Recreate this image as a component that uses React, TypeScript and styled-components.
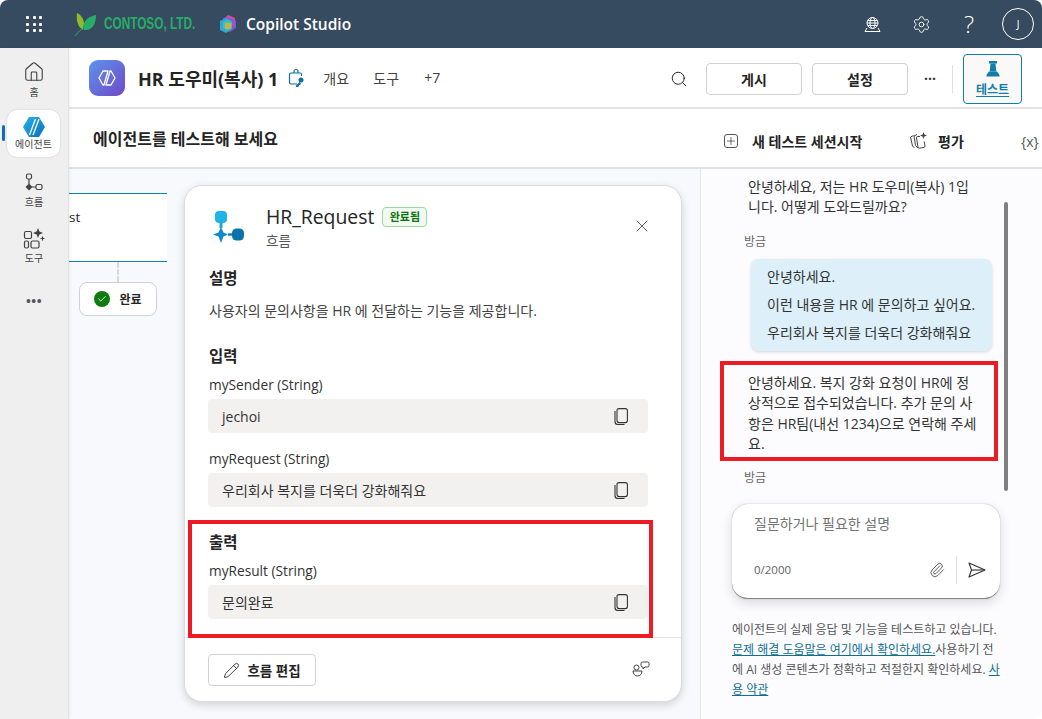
import React from "react";
import styled, { createGlobalStyle } from "styled-components";
import { Search, Settings, X, Pencil, Paperclip, Plus, Check, House } from "lucide-react";

const Global = createGlobalStyle`
  * { box-sizing: border-box; }
  html, body { margin: 0; padding: 0; height: 100%; background: #fff; overflow: hidden; }
  body { font-family: "Open Sans", "Noto Sans CJK KR", sans-serif; color: #242424; }
`;

const Shell = styled.div`
  width: 1042px;
  height: 719px;
  display: flex;
  flex-direction: column;
  overflow: hidden;
  position: relative;
`;

const TopBar = styled.header`
  height: 48px;
  flex: none;
  background: #364b60;
  border-radius: 8px 8px 0 0;
  display: flex;
  align-items: center;
  color: #fff;
`;
const Waffle = styled.div`
  margin-left: 26px;
  width: 16px;
  display: grid;
  grid-template-columns: repeat(3, 3px);
  gap: 3.5px;
  span { width: 3px; height: 3px; background: #fff; border-radius: 1px; }
`;
const LogoSlot = styled.div<{ $ml: number }>`
  margin-left: ${(p) => p.$ml}px;
  display: flex;
`;
const ContosoText = styled.span`
  margin-left: 7px;
  width: 92px;
  font-family: "Liberation Sans", sans-serif;
  font-size: 16px;
  font-weight: 700;
  color: #27ad68;
  white-space: nowrap;
  transform: scaleX(0.737);
  transform-origin: left center;
`;
const StudioName = styled.span`
  margin-left: 9px;
  font-size: 15.5px;
  font-weight: 600;
`;
const TopRight = styled.div`
  margin-left: auto;
  margin-right: 8px;
  display: flex;
  align-items: center;
`;
const TopIcon = styled.div<{ $w: number }>`
  width: ${(p) => p.$w}px;
  display: flex;
  justify-content: center;
`;
const HelpMark = styled.span`
  font-size: 24px;
  line-height: 28px;
  font-weight: 300;
`;
const Avatar = styled.div`
  width: 32px;
  height: 32px;
  margin-left: 9px;
  border-radius: 50%;
  border: 1px solid #fff;
  display: flex;
  align-items: center;
  justify-content: center;
  font-size: 10px;
`;

const Main = styled.div`
  flex: 1;
  display: flex;
  min-height: 0;
`;

const Rail = styled.nav`
  width: 69px;
  flex: none;
  background: #efefef;
  border-right: 1px solid #e3e3e3;
  box-shadow: 1px 0 3px rgba(0, 0, 0, 0.06);
  display: flex;
  flex-direction: column;
  align-items: center;
  padding-top: 8px;
  position: relative;
  z-index: 1;
`;
const RailItem = styled.div<{ $active?: boolean; $mt?: number }>`
  width: 53px;
  height: ${(p) => (p.$active ? 47 : 46)}px;
  margin-top: ${(p) => p.$mt ?? 0}px;
  margin-left: ${(p) => (p.$active ? -1 : 0)}px;
  display: flex;
  flex-direction: column;
  align-items: center;
  justify-content: center;
  gap: ${(p) => (p.$active ? 1 : 3)}px;
  font-size: 10px;
  line-height: 12px;
  color: #424242;
  background: ${(p) => (p.$active ? "#fff" : "transparent")};
  border-radius: 10px;
  box-shadow: ${(p) => (p.$active ? "0 0 2px rgba(0,0,0,0.18)" : "none")};
  position: relative;
`;
const RailMark = styled.i`
  position: absolute;
  left: -5px;
  top: 15px;
  width: 3px;
  height: 16px;
  border-radius: 2px;
  background: #0f6cbd;
`;
const RailDots = styled.div`
  margin-top: 26px;
  font-size: 13px;
  font-weight: 700;
  letter-spacing: 0.5px;
  color: #555;
  line-height: 12px;
`;

const Content = styled.div`
  flex: 1;
  min-width: 0;
  display: flex;
  flex-direction: column;
`;

const AgentHeader = styled.div`
  height: 61px;
  flex: none;
  background: #fff;
  border-bottom: 2px solid #e4e4e4;
  display: flex;
  align-items: center;
  padding-left: 20px;
`;
const AgentBadge = styled.div`
  width: 36px;
  height: 36px;
  border-radius: 9px;
  background: linear-gradient(135deg, #5c94ec, #7049c6);
  display: flex;
  align-items: center;
  justify-content: center;
`;
const AgentName = styled.h1`
  margin: 0 0 0 13px;
  font-size: 18px;
  font-weight: 700;
  white-space: nowrap;
`;
const BriefSlot = styled.div`
  margin: 0 17px 0 10px;
  display: flex;
`;
const HeadTab = styled.span<{ $w: number }>`
  width: ${(p) => p.$w}px;
  font-size: 14px;
  color: #424242;
`;
const HeaderRight = styled.div`
  margin: 2px 20px 0 auto;
  display: flex;
  align-items: center;
`;
const SearchIcon = styled(Search)`
  margin-right: 8px;
`;
const OutlineBtn = styled.button`
  width: 96px;
  height: 32px;
  margin-left: 10px;
  border: 1px solid #d1d1d1;
  border-radius: 4px;
  background: #fff;
  font: inherit;
  font-size: 14px;
  font-weight: 700;
  color: #242424;
`;
const More = styled.span`
  width: 44px;
  text-align: center;
  font-size: 14px;
  font-weight: 700;
  color: #333;
`;
const VRule = styled.span`
  width: 1px;
  height: 28px;
  background: #e0e0e0;
`;
const TestBtn = styled.button`
  width: 59px;
  height: 50px;
  margin-left: 10px;
  border: 1px solid #0f7ea8;
  border-radius: 4px;
  background: #faf9f8;
  font: inherit;
  font-size: 12px;
  font-weight: 700;
  color: #0f7ea8;
  display: flex;
  flex-direction: column;
  align-items: center;
  justify-content: center;
  gap: 2px;
  padding: 2px 0 0;
  span { text-decoration: underline; text-underline-offset: 2px; }
`;

const Panels = styled.div`
  flex: 1;
  display: flex;
  min-height: 0;
`;
const LeftPanel = styled.section`
  width: 631px;
  flex: none;
  display: flex;
  flex-direction: column;
`;
const PanelHead = styled.div`
  height: 60px;
  flex: none;
  background: #fff;
  border-bottom: 2px solid #e0e0e0;
  padding-left: 24px;
  display: flex;
  align-items: center;
  font-size: 16px;
  font-weight: 700;
`;
const Canvas = styled.div`
  flex: 1;
  background: #f7f9fc;
  display: flex;
  padding: 16px 0 0;
  min-height: 0;
`;
const FlowSide = styled.div`
  width: 98px;
  flex: none;
  margin-right: 17px;
  display: flex;
  flex-direction: column;
  align-items: flex-start;
  padding-top: 8px;
`;
const FlowNode = styled.div`
  width: 98px;
  height: 69px;
  background: #fff;
  border-top: 1px solid #0b86b5;
  border-bottom: 1px solid #0b86b5;
  font-size: 13.5px;
  padding-top: 14px;
`;
const Dash = styled.i`
  width: 0;
  height: 20px;
  margin-left: 48px;
  border-left: 2px dashed #d8d8d8;
`;
const DonePill = styled.div`
  width: 78px;
  height: 34px;
  margin-left: 10px;
  border: 1px solid #d1d1d1;
  border-radius: 8px;
  background: #fff;
  display: flex;
  align-items: center;
  justify-content: center;
  gap: 9px;
  font-size: 12px;
  font-weight: 700;
`;
const CheckDot = styled.span`
  width: 16px;
  height: 16px;
  border-radius: 50%;
  background: #107c10;
  display: flex;
  align-items: center;
  justify-content: center;
`;

const Card = styled.article`
  width: 498px;
  height: 517px;
  flex: none;
  background: #fff;
  border: 1px solid #dcdcdc;
  border-radius: 18px;
  box-shadow: 0 3px 8px rgba(0, 0, 0, 0.16);
  display: flex;
  flex-direction: column;
  padding: 0 24px;
`;
const CardHead = styled.div`
  display: flex;
  align-items: flex-start;
  height: 75px;
  padding: 19px 0 0 4px;
`;
const GlyphSlot = styled.div`
  margin-top: 5px;
  display: flex;
`;
const CardTitles = styled.div`
  margin-left: 21px;
`;
const TitleRow = styled.div`
  display: flex;
  align-items: center;
  gap: 8px;
  height: 24px;
`;
const CardTitle = styled.span`
  font-size: 19.4px;
  line-height: 24px;
`;
const DoneBadge = styled.span`
  height: 20px;
  width: 45px;
  border: 1px solid #9fd89f;
  border-radius: 4px;
  background: #f1faf1;
  color: #0e700e;
  font-size: 11px;
  font-weight: 700;
  text-align: center;
  line-height: 17px;
`;
const CardSub = styled.div`
  margin-top: 3px;
  font-size: 13.5px;
  line-height: 18px;
  color: #555;
`;
const CloseBtn = styled.div`
  margin: 11px 5px 0 auto;
  display: flex;
  color: #424242;
`;
const SectionTitle = styled.h3<{ $mt: number }>`
  margin: ${(p) => p.$mt}px 0 0;
  font-size: 15.5px;
  line-height: 20px;
  font-weight: 700;
`;
const Desc = styled.p`
  margin: 13px 0 0;
  font-size: 14px;
  line-height: 20px;
  color: #424242;
`;
const FieldLabel = styled.div<{ $mt: number }>`
  margin-top: ${(p) => p.$mt}px;
  font-size: 13.7px;
  line-height: 18px;
  color: #333;
`;
const FieldBox = styled.div`
  margin: 5px 0 0 -1px;
  width: 440px;
  height: 34px;
  border-radius: 4px;
  background: #f3f1ef;
  display: flex;
  align-items: center;
  justify-content: space-between;
  padding: 0 20px 0 14px;
  font-size: 14px;
  color: #333;
`;
const CardFoot = styled.div`
  margin: auto -24px 0;
  height: 64px;
  border-top: 1px solid #e4e4e4;
  padding: 16px 31px 0 23px;
  display: flex;
  justify-content: space-between;
  align-items: flex-start;
`;
const EditBtn = styled.button`
  width: 108px;
  height: 32px;
  border: 1px solid #d1d1d1;
  border-radius: 4px;
  background: #fff;
  font: inherit;
  font-size: 13.5px;
  font-weight: 700;
  color: #242424;
  display: flex;
  align-items: center;
  justify-content: center;
  gap: 7px;
  padding: 0;
`;
const FeedbackSlot = styled.div`
  margin-top: 7px;
  display: flex;
`;

const RightPanel = styled.aside`
  flex: 1;
  min-width: 0;
  display: flex;
  flex-direction: column;
  background: #fcfcfe;
  border-left: 1px solid #e6e6e6;
  border-bottom-right-radius: 8px;
  position: relative;
`;
const RightHead = styled.div`
  height: 60px;
  flex: none;
  background: #fff;
  border-bottom: 2px solid #e0e0e0;
  margin-left: -1px;
  display: flex;
  align-items: center;
  padding: 6px 0 0 24px;
  font-size: 14px;
  font-weight: 700;
  white-space: nowrap;
  overflow: hidden;
`;
const PlusBox = styled(Plus)`
  border: 1px solid #555;
  border-radius: 3px;
  flex: none;
`;
const HeadLabel = styled.span<{ $w: number; $ml: number }>`
  margin-left: ${(p) => p.$ml}px;
  width: ${(p) => p.$w}px;
  flex: none;
`;
const VarIcon = styled.span`
  font-weight: 400;
  font-size: 14px;
  color: #555;
  flex: none;
`;
const Chat = styled.div`
  height: 322px;
  flex: none;
  padding: 8px 30px 0 47px;
  font-size: 14px;
  line-height: 20.4px;
  color: #333;
  overflow: hidden;
  white-space: nowrap;
`;
const Stamp = styled.div<{ $mt: number }>`
  margin: ${(p) => p.$mt}px 0 0 -4px;
  font-size: 12px;
  line-height: 16px;
  color: #666;
`;
const Bubble = styled.div`
  width: 241px;
  height: 92px;
  margin: 9px 0 0 3px;
  border-radius: 8px;
  background: #ddf0fa;
  box-shadow: 0 1px 3px rgba(0, 0, 0, 0.16);
  padding: 8px 0 0 16px;
  p { margin: 0 0 7.6px; }
`;
const BotText = styled.p`
  margin: 22px 0 0;
`;
const Scroll = styled.i`
  position: absolute;
  left: 303px;
  top: 93px;
  width: 4px;
  height: 289px;
  border-radius: 2px;
  background: #808080;
`;
const Composer = styled.div`
  width: 268px;
  height: 95px;
  margin: 13px 0 0 31px;
  flex: none;
  background: #fff;
  border-radius: 16px;
  border-bottom: 1px solid #858585;
  box-shadow: 0 0 1px rgba(0, 0, 0, 0.45), 0 4px 12px rgba(0, 0, 0, 0.14);
  padding: 11px 0 0 22px;
  font-size: 14px;
  line-height: 18px;
  color: #737373;
  display: flex;
  flex-direction: column;
`;
const ComposerFoot = styled.div`
  margin-top: 23px;
  display: flex;
  align-items: center;
  font-size: 11.5px;
  color: #616161;
`;
const ComposerTools = styled.div`
  margin: 0 14px 0 auto;
  display: flex;
  align-items: center;
  color: #333;
`;
const ToolRule = styled.span`
  width: 1px;
  height: 28px;
  background: #e0e0e0;
  margin: 0 11px;
`;
const Disclaimer = styled.p`
  margin: 21px 0 0 31px;
  font-size: 12px;
  line-height: 20px;
  color: #555;
  white-space: nowrap;
  a { color: #0f6f8f; text-decoration: underline; }
`;

const RedBox = styled.div<{ $l: number; $t: number; $w: number; $h: number }>`
  position: absolute;
  left: ${(p) => p.$l}px;
  top: ${(p) => p.$t}px;
  width: ${(p) => p.$w}px;
  height: ${(p) => p.$h}px;
  border: 4px solid #ed1c24;
  pointer-events: none;
  z-index: 5;
`;

const Leaf = () => (
  <svg width="22" height="24" viewBox="0 0 22 24">
    <path d="M8 18C3 15 1 9 2 1c4 2 7 6 7 11z" fill="#8dbb2e" />
    <path d="M9 18C7 11 11 5 21 3c0 8-3 14-9 15z" fill="#27ad68" />
    <path d="M0 24C4 19 8 16 14 9" stroke="#27ad68" strokeWidth="1" fill="none" />
  </svg>
);

const CopilotLogo = () => (
  <svg width="18" height="19" viewBox="0 0 18 19">
    <path d="M9 0l7 3v8l-7 4-5-3V5z" fill="#e0489a" />
    <path d="M4 3l6-1 7 4v7l-6 4-7-2z" fill="#8c56d8" opacity=".85" />
    <path d="M1 6l6-3 6 3v8l-6 4-6-3z" fill="#27a9e0" />
    <path d="M4 7l5-2 4 3v5l-5 3-4-3z" fill="#3fc8a0" />
    <rect x="6" y="8" width="6" height="6" rx="1" fill="#f0a63c" opacity=".8" />
  </svg>
);

const Hexes = () => (
  <svg width="22" height="22" viewBox="0 0 22 22" fill="none" stroke="#fff" strokeWidth="1.3" strokeLinejoin="round">
    <path d="M12 4H7L3 11l4 7h1z" />
    <path d="M14 4h1l4 7-4 7h-5z" />
  </svg>
);

const AgentGlyph = () => (
  <svg width="22" height="20" viewBox="0 0 22 20">
    <defs>
      <linearGradient id="ag" x1="0" y1="0" x2="1" y2="1">
        <stop offset="0" stopColor="#23b5e8" />
        <stop offset="1" stopColor="#0f6cbd" />
      </linearGradient>
    </defs>
    <path d="M6 0h10l6 10-6 10H6L0 10z" fill="url(#ag)" />
    <path d="M12.500 2L6.500 18M16 2l-6 16" stroke="#fff" strokeWidth="1.3" />
  </svg>
);

const FlowGlyph = () => (
  <svg width="32" height="34" viewBox="0 0 32 34">
    <rect x="2" y="1" width="12" height="12" rx="4" fill="#1fb4e4" />
    <rect x="6.500" y="12" width="3" height="6" fill="#1fa6d8" />
    <path d="M8 17l2.500 5.500L15 24.500l-4.500 2L8 33l-2.500-6.500L0 24.500l5.500-2z" fill="#0f8cc8" />
    <rect x="15" y="23.300" width="4" height="2.400" fill="#0f7cb8" />
    <rect x="19" y="18.500" width="12" height="12" rx="4.500" fill="#0b72ac" />
  </svg>
);

const RailFlowIcon = () => (
  <svg width="20" height="20" viewBox="0 0 20 20" fill="none" stroke="#424242" strokeWidth="1.2">
    <rect x="2.500" y="1" width="5" height="5" rx="1.500" />
    <path d="M5 6v5M8 14h4" />
    <path d="M5 10.500L8.500 14 5 17.500 1.500 14z" fill="#424242" stroke="none" />
    <rect x="12" y="11.500" width="6" height="5" rx="1.500" />
  </svg>
);

const ToolsIcon = () => (
  <svg width="22" height="21" viewBox="0 0 22 21" fill="none" stroke="#424242" strokeWidth="1.2">
    <rect x="1.500" y="3.500" width="7" height="7" rx="1.500" />
    <rect x="1.500" y="13" width="4" height="7" rx="1.500" />
    <rect x="8" y="13" width="8" height="7" rx="1.500" />
    <path d="M15 0l1.400 3.600L20 5l-3.600 1.400L15 10l-1.400-3.600L10 5l3.600-1.400z" fill="#424242" stroke="none" />
    <path d="M19.500 8.500v4M17.500 10.500h4" />
  </svg>
);

const BotGlobe = () => (
  <svg width="17" height="17" viewBox="0 0 17 17" fill="none" stroke="#fff" strokeWidth="1">
    <circle cx="8.500" cy="7" r="5.500" />
    <ellipse cx="8.500" cy="7" rx="2.500" ry="5.500" />
    <path d="M3 7h11M3.800 4.500h9.400M3.800 9.500h9.400" />
    <path d="M3 12l-2 3.500h15L14 12" />
  </svg>
);

const Briefcase = () => (
  <svg width="18" height="20" viewBox="0 0 18 20" fill="none" stroke="#0f6f9f" strokeWidth="1.200">
    <path d="M6 5V3.500A2 2 0 0 1 8 1.500h0a2 2 0 0 1 2 2V5" />
    <path d="M9 16H3a1.500 1.500 0 0 1-1.500-1.500V6.500A1.500 1.500 0 0 1 3 5h9a1.500 1.500 0 0 1 1.500 1.500V8" />
    <circle cx="13" cy="12" r="2.500" fill="#0f6f9f" stroke="none" />
    <path d="M11.500 14L8 17.500v1.500h2l1-1v-1h1l1-1.500" fill="#0f6f9f" stroke="none" />
  </svg>
);

const Beaker = () => (
  <svg width="14" height="17" viewBox="0 0 14 17">
    <rect x="3" y="0" width="8" height="2.500" fill="#0f7ea8" />
    <path d="M4.500 2.500h5l.8 8H3.700z" fill="#0f7ea8" />
    <path d="M3 10.500h8l2.500 3.500v1.500H.5V14z" fill="#0f7ea8" />
  </svg>
);

const EvalIcon = () => (
  <svg width="18" height="18" viewBox="0 0 18 18" fill="none" stroke="#424242" strokeWidth="1">
    <path d="M4.500 3.500L1.500 5 3.500 14l2 2" />
    <path d="M8 2.500L5 4l1.500 9.500 2.500 2.500" />
    <path d="M11 4.500H8.800A1.300 1.300 0 0 0 7.500 6l1.500 9a1.300 1.300 0 0 0 1.500 1.200l4.500-.8a1.300 1.300 0 0 0 1-1.500l-.8-4.400" />
    <path d="M14.500 0l.9 2.600L18 3.500l-2.600.9-.9 2.600-.9-2.600-2.600-.9 2.600-.9z" fill="#424242" stroke="none" />
  </svg>
);

const FeedbackIcon = () => (
  <svg width="18" height="16" viewBox="0 0 18 16" fill="none" stroke="#424242" strokeWidth="1">
    <circle cx="4.500" cy="6.500" r="2.500" />
    <path d="M1 10h9c0 3-2 5-4.500 5S1 13 1 10z" />
    <path d="M9 2.500A1.500 1.500 0 0 1 10.500 1h5A1.500 1.500 0 0 1 17 2.500v2A1.500 1.500 0 0 1 15.500 6H13l-2 2V6h-.5A1.500 1.500 0 0 1 9 4.500z" />
  </svg>
);

const CopyGlyph = () => (
  <svg width="14" height="17" viewBox="0 0 14 17" fill="none" stroke="#333" strokeWidth="1.1">
    <rect x="3" y="0.600" width="10.400" height="14" rx="2" />
    <path d="M1 3v10.500A3 3 0 0 0 4 16.500h6.500" />
  </svg>
);

const SendGlyph = () => (
  <svg width="18" height="16" viewBox="0 0 18 16" fill="none" stroke="#333" strokeWidth="1.1" strokeLinejoin="round">
    <path d="M1 1l16 7-16 7 2.500-7z" />
    <path d="M3.500 8H17" />
  </svg>
);

const Field = ({ children }: { children: React.ReactNode }) => (
  <FieldBox>{children}<CopyGlyph /></FieldBox>
);

export default function App() {
  return (
    <Shell>
      <Global />
      <TopBar>
        <Waffle>{Array.from({ length: 9 }).map((_, i) => <span key={i} />)}</Waffle>
        <LogoSlot $ml={33}><Leaf /></LogoSlot>
        <ContosoText>CONTOSO, LTD.</ContosoText>
        <LogoSlot $ml={23}><CopilotLogo /></LogoSlot>
        <StudioName>Copilot Studio</StudioName>
        <TopRight>
          <TopIcon $w={49}><BotGlobe /></TopIcon>
          <TopIcon $w={48}><Settings size={19} strokeWidth={1.2} /></TopIcon>
          <TopIcon $w={48}><HelpMark>?</HelpMark></TopIcon>
          <Avatar>J</Avatar>
        </TopRight>
      </TopBar>
      <Main>
        <Rail>
          <RailItem>
            <House size={22} strokeWidth={1.2} />
            홈
          </RailItem>
          <RailItem $active $mt={8}>
            <RailMark />
            <AgentGlyph />
            에이전트
          </RailItem>
          <RailItem $mt={10}>
            <RailFlowIcon />
            흐름
          </RailItem>
          <RailItem $mt={10}>
            <ToolsIcon />
            도구
          </RailItem>
          <RailDots>•••</RailDots>
        </Rail>
        <Content>
          <AgentHeader>
            <AgentBadge><Hexes /></AgentBadge>
            <AgentName>HR 도우미(복사) 1</AgentName>
            <BriefSlot><Briefcase /></BriefSlot>
            <HeadTab $w={50}>개요</HeadTab>
            <HeadTab $w={51}>도구</HeadTab>
            <HeadTab $w={30}>+7</HeadTab>
            <HeaderRight>
              <SearchIcon size={18} strokeWidth={1.3} />
              <OutlineBtn>게시</OutlineBtn>
              <OutlineBtn>설정</OutlineBtn>
              <More>···</More>
              <VRule />
              <TestBtn><Beaker /><span>테스트</span></TestBtn>
            </HeaderRight>
          </AgentHeader>
          <Panels>
            <LeftPanel>
              <PanelHead>에이전트를 테스트해 보세요</PanelHead>
              <Canvas>
                <FlowSide>
                  <FlowNode>st</FlowNode>
                  <Dash />
                  <DonePill>
                    <CheckDot><Check size={10} color="#fff" strokeWidth={2} /></CheckDot>
                    완료
                  </DonePill>
                </FlowSide>
                <Card>
                  <CardHead>
                    <GlyphSlot><FlowGlyph /></GlyphSlot>
                    <CardTitles>
                      <TitleRow>
                        <CardTitle>HR_Request</CardTitle>
                        <DoneBadge>완료됨</DoneBadge>
                      </TitleRow>
                      <CardSub>흐름</CardSub>
                    </CardTitles>
                    <CloseBtn><X size={20} strokeWidth={1} /></CloseBtn>
                  </CardHead>
                  <SectionTitle $mt={7}>설명</SectionTitle>
                  <Desc>사용자의 문의사항을 HR 에 전달하는 기능을 제공합니다.</Desc>
                  <SectionTitle $mt={25}>입력</SectionTitle>
                  <FieldLabel $mt={10}>mySender (String)</FieldLabel>
                  <Field>jechoi</Field>
                  <FieldLabel $mt={17}>myRequest (String)</FieldLabel>
                  <Field>우리회사 복지를 더욱더 강화해줘요</Field>
                  <SectionTitle $mt={25}>출력</SectionTitle>
                  <FieldLabel $mt={10}>myResult (String)</FieldLabel>
                  <Field>문의완료</Field>
                  <CardFoot>
                    <EditBtn><Pencil size={17} strokeWidth={1.2} />흐름 편집</EditBtn>
                    <FeedbackSlot><FeedbackIcon /></FeedbackSlot>
                  </CardFoot>
                </Card>
              </Canvas>
            </LeftPanel>
            <RightPanel>
              <RightHead>
                <PlusBox size={14} strokeWidth={1.3} />
                <HeadLabel $ml={14} $w={157}>새 테스트 세션시작</HeadLabel>
                <EvalIcon />
                <HeadLabel $ml={11} $w={83}>평가</HeadLabel>
                <VarIcon>{"{x}"}</VarIcon>
              </RightHead>
              <Chat>
                안녕하세요, 저는 HR 도우미(복사) 1입<br />니다. 어떻게 도와드릴까요?
                <Stamp $mt={16}>방금</Stamp>
                <Bubble>
                  <p>안녕하세요.</p>
                  <p>이런 내용을 HR 에 문의하고 싶어요.</p>
                  <p>우리회사 복지를 더욱더 강화해줘요</p>
                </Bubble>
                <BotText>안녕하세요. 복지 강화 요청이 HR에 정<br />상적으로 접수되었습니다. 추가 문의 사<br />항은 HR팀(내선 1234)으로 연락해 주세<br />요.</BotText>
                <Stamp $mt={16}>방금</Stamp>
              </Chat>
              <Scroll />
              <Composer>
                질문하거나 필요한 설명
                <ComposerFoot>
                  0/2000
                  <ComposerTools>
                    <Paperclip size={16} strokeWidth={1.2} />
                    <ToolRule />
                    <SendGlyph />
                  </ComposerTools>
                </ComposerFoot>
              </Composer>
              <Disclaimer>
                에이전트의 실제 응답 및 기능을 테스트하고 있습니다.<br />
                <a>문제 해결 도움말은 여기에서 확인하세요.</a>사용하기 전<br />
                에 AI 생성 콘텐츠가 정확하고 적절한지 확인하세요. <a>사<br />용 약관</a>
              </Disclaimer>
            </RightPanel>
          </Panels>
        </Content>
      </Main>
      <RedBox $l={188} $t={520} $w={465} $h={118} />
      <RedBox $l={720} $t={361} $w={278} $h={100} />
    </Shell>
  );
}
